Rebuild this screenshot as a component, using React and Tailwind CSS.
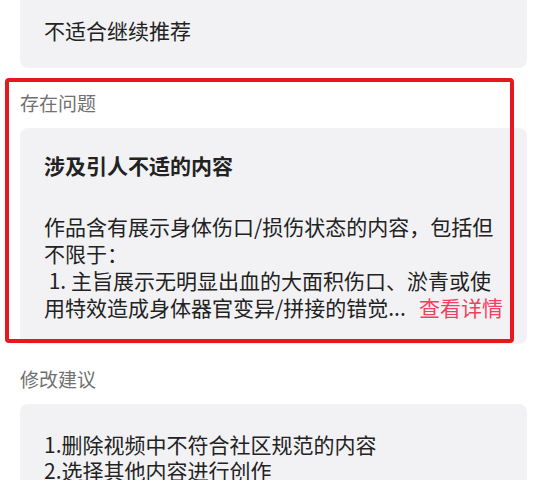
import React from 'react';

const font = { fontFamily: '"Noto Sans CJK SC", "Noto Sans", sans-serif' };

const App = () => {
    return (
        <div className="min-h-screen bg-white text-[#222222] overflow-hidden" style={font}>
            <div className="pl-[20px] pr-[14px]">
                {/* 上一段的结论卡片 */}
                <div className="rounded-b-[8px] bg-[#f2f2f5] px-[24px] pt-[17px] pb-[24px] text-[21px] leading-[27px]">
                    不适合继续推荐
                </div>

                {/* 存在问题 */}
                <div className="relative pt-[21px]">
                    <div className="mb-[12px] text-[19px] leading-[27px] text-[#707070]">存在问题</div>
                    <div className="rounded-[8px] bg-[#f2f2f5] px-[24px] pt-[24px] pb-[23px] text-[21px] leading-[27px]">
                        <div className="font-semibold">涉及引人不适的内容</div>
                        <div className="mt-[34px]">
                            <div>作品含有展示身体伤口/损伤状态的内容，包括但不限于：</div>
                            <div className="whitespace-pre"> 1. 主旨展示无明显出血的大面积伤口、淤青或使</div>
                            <div className="flex items-center">
                                <span className="whitespace-nowrap">用特效造成身体器官变异/拼接的错觉...</span>
                                <span className="ml-auto text-[#f2405f] whitespace-nowrap">查看详情</span>
                            </div>
                        </div>
                    </div>
                    {/* 红色标注框 */}
                    <div className="pointer-events-none absolute left-[-15px] top-[10px] right-[13px] bottom-[1px] rounded-[4px] border-[4px] border-[#e8161f]"></div>
                </div>

                {/* 修改建议 */}
                <div className="mt-[21px] mb-[12px] text-[19px] leading-[27px] text-[#707070]">修改建议</div>
                <div className="rounded-[8px] bg-[#f2f2f5] px-[24px] pt-[27px] pb-[24px] text-[21px] leading-[26px]">
                    <div>1.删除视频中不符合社区规范的内容</div>
                    <div>2.选择其他内容进行创作</div>
                </div>
            </div>
        </div>
    );
};

export default App;
